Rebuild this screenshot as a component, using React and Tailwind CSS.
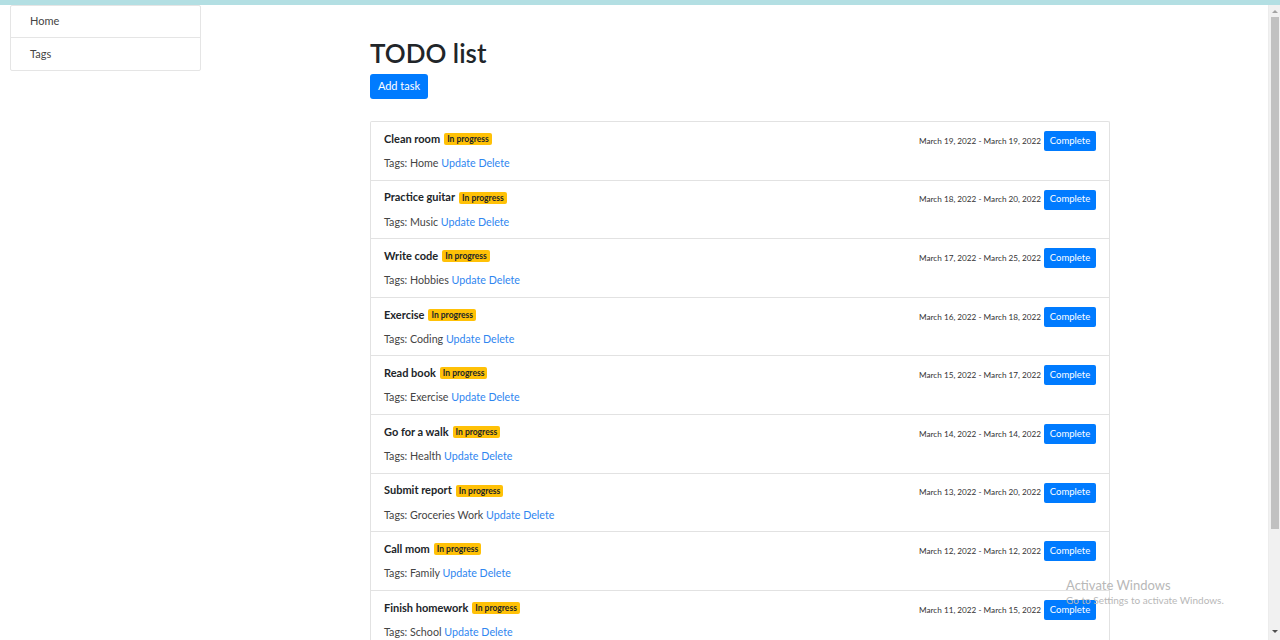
import React from "react";

const tasks = [
  { title: "Clean room", start: "March 19, 2022", end: "March 19, 2022", tags: "Home" },
  { title: "Practice guitar", start: "March 18, 2022", end: "March 20, 2022", tags: "Music" },
  { title: "Write code", start: "March 17, 2022", end: "March 25, 2022", tags: "Hobbies" },
  { title: "Exercise", start: "March 16, 2022", end: "March 18, 2022", tags: "Coding" },
  { title: "Read book", start: "March 15, 2022", end: "March 17, 2022", tags: "Exercise" },
  { title: "Go for a walk", start: "March 14, 2022", end: "March 14, 2022", tags: "Health" },
  { title: "Submit report", start: "March 13, 2022", end: "March 20, 2022", tags: "Groceries Work" },
  { title: "Call mom", start: "March 12, 2022", end: "March 12, 2022", tags: "Family" },
  { title: "Finish homework", start: "March 11, 2022", end: "March 15, 2022", tags: "School" },
];

function TaskItem({ task }) {
  return (
    <div className="h-[58.6px] shrink-0 border-b border-[#e2e2e2] px-[13px] pt-[9px]">
      <div className="flex items-start justify-between">
        <div className="flex h-4 items-center gap-[4px]">
          <span className="text-[11px] font-bold text-[#212529]">{task.title}</span>
          <span className="rounded-[2px] bg-[#ffc107] px-[3px] text-[8.5px] font-bold leading-[12px] text-[#212529]">
            In progress
          </span>
        </div>
        <div className="flex h-5 items-center gap-[3px]">
          <span className="text-[8.2px] text-[#333]">
            {task.start} - {task.end}
          </span>
          <button className="h-5 w-[52px] rounded-[2px] bg-[#007bff] text-[9.5px] text-white">
            Complete
          </button>
        </div>
      </div>
      <div className="mt-[4px] text-[10.7px] leading-[15px] text-[#444]">
        Tags: {task.tags} <span className="text-[#2f86f0]">Update</span>{" "}
        <span className="text-[#2f86f0]">Delete</span>
      </div>
    </div>
  );
}

export default function App() {
  return (
    <div
      className="relative flex h-[640px] w-[1280px] flex-col overflow-hidden bg-white"
      style={{ fontFamily: 'Lato, "Noto Sans", sans-serif' }}
    >
      <div className="h-[5px] shrink-0 bg-[#b3dfe3]" />
      <div className="flex min-h-0 flex-1">
        <div className="flex min-w-0 flex-1">
          <div className="ml-[10px] w-[191px] shrink-0 self-start">
            <div className="rounded-[2px] border border-[#e5e5e5]">
              <div className="flex h-[32px] items-center border-b border-[#e5e5e5] pl-[19px] text-[11px] text-[#444]">
                Home
              </div>
              <div className="flex h-[32px] items-center pl-[19px] text-[11px] text-[#444]">Tags</div>
            </div>
          </div>
          <div className="ml-[169px] flex w-[740px] flex-col">
            <h1 className="mt-[30px] shrink-0 text-[26px] font-semibold leading-[36px] text-[#212529]">TODO list</h1>
            <button className="mt-[3px] h-[25px] w-[58px] shrink-0 rounded-[3px] bg-[#007bff] text-[11px] text-white">
              Add task
            </button>
            <div className="mt-[22px] flex shrink-0 flex-col rounded-t-[2px] border border-b-0 border-[#e2e2e2]">
              {tasks.map((t) => (
                <TaskItem key={t.title} task={t} />
              ))}
            </div>
          </div>
        </div>
        <div className="flex w-[12px] shrink-0 flex-col items-center border-l border-[#ececec] bg-[#f1f1f1]">
          <div className="mt-[5px] h-0 w-0 border-x-[3px] border-b-[3px] border-x-transparent border-b-[#a3a3a3]" />
          <div className="mt-[4px] h-[512px] w-[8px] bg-[#c1c1c1]" />
          <div className="flex-1" />
          <div className="mb-[7px] h-0 w-0 border-x-[3px] border-t-[3px] border-x-transparent border-t-[#505050]" />
        </div>
      </div>
      <div className="pointer-events-none absolute left-[1066px] top-[577px] text-[#b8b8b8]">
        <div className="text-[13px] leading-[17px]">Activate Windows</div>
        <div className="text-[10px] leading-[12px]">Go to Settings to activate Windows.</div>
      </div>
    </div>
  );
}
